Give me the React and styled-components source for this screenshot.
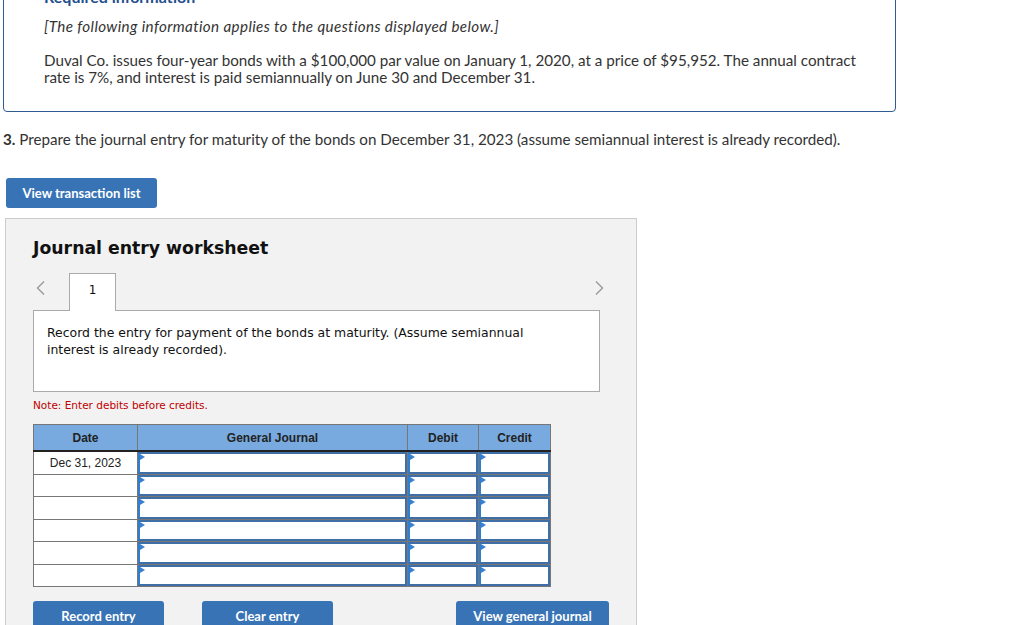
import styled, { createGlobalStyle } from "styled-components";

const GlobalStyle = createGlobalStyle`
  body {
    margin: 0;
    background: #fff;
    font-family: Lato, "Liberation Sans", sans-serif;
    color: #333;
  }
`;

const rows = ["Dec 31, 2023", "", "", "", "", ""];

function Chevron({ right }) {
  return (
    <svg width="10" height="16" viewBox="0 0 10 16">
      <path
        d={right ? "M2 1.5 L8.5 8 L2 14.5" : "M8 1.5 L1.5 8 L8 14.5"}
        fill="none"
        stroke="#9a9a9a"
        strokeWidth="1.4"
      />
    </svg>
  );
}

export default function App() {
  return (
    <Page>
      <GlobalStyle />
      <InfoBox>
        <InfoTitle>Required information</InfoTitle>
        <Italic>[The following information applies to the questions displayed below.]</Italic>
        <InfoText>
          Duval Co. issues four-year bonds with a $100,000 par value on January 1, 2020, at a
          price of $95,952. The annual contract rate is 7%, and interest is paid semiannually on
          June 30 and December 31.
        </InfoText>
      </InfoBox>

      <Question>
        <b>3.</b> Prepare the journal entry for maturity of the bonds on December 31, 2023 (assume
        semiannual interest is already recorded).
      </Question>

      <BlueButton $width={151}>View transaction list</BlueButton>

      <Worksheet>
        <WorksheetTitle>Journal entry worksheet</WorksheetTitle>

        <TabRow>
          <Arrow>
            <Chevron />
          </Arrow>
          <Tab>1</Tab>
          <Arrow $right>
            <Chevron right />
          </Arrow>
        </TabRow>

        <EntryBox>
          Record the entry for payment of the bonds at maturity. (Assume semiannual
          <br />
          interest is already recorded).
        </EntryBox>

        <Note>Note: Enter debits before credits.</Note>

        <Table>
          <thead>
            <tr>
              <Th $w={103}>Date</Th>
              <Th $w={269}>General Journal</Th>
              <Th $w={70}>Debit</Th>
              <Th $w={71}>Credit</Th>
            </tr>
          </thead>
          <tbody>
            {rows.map((d, i) => (
              <tr key={i}>
                <DateCell>{d}</DateCell>
                <InputCell>
                  <Field />
                </InputCell>
                <InputCell>
                  <Field />
                </InputCell>
                <InputCell>
                  <Field />
                </InputCell>
              </tr>
            ))}
          </tbody>
        </Table>

        <ButtonRow>
          <BlueButton $width={131}>Record entry</BlueButton>
          <BlueButton $width={131}>Clear entry</BlueButton>
          <Spacer />
          <BlueButton $width={153}>View general journal</BlueButton>
        </ButtonRow>
      </Worksheet>
    </Page>
  );
}

const Page = styled.div`
  width: 1024px;
  height: 625px;
  overflow: hidden;
`;

const InfoBox = styled.section`
  margin: -30px 0 0 3px;
  width: 893px;
  box-sizing: border-box;
  border: 1px solid #2d5b92;
  border-radius: 4px;
  padding: 16px 30px 25px 40px;
`;

const InfoTitle = styled.h3`
  margin: 0 0 11px;
  font-size: 16px;
  font-weight: 700;
  color: #1f4f8e;
  line-height: 20px;
`;

const Italic = styled.p`
  margin: 0 0 17px;
  font-style: italic;
  font-size: 15.2px;
  letter-spacing: 0.38px;
  line-height: 17px;
`;

const InfoText = styled.p`
  margin: 0;
  font-size: 15.2px;
  line-height: 17px;
`;

const Question = styled.p`
  margin: 19px 0 0 3px;
  font-size: 15.2px;
  line-height: 17px;
  b {
    font-weight: 700;
  }
`;

const BlueButton = styled.button`
  display: block;
  width: ${(p) => p.$width}px;
  height: 30px;
  border: none;
  border-radius: 3px;
  background: #3873b6;
  color: #fff;
  font-family: Lato, "Liberation Sans", sans-serif;
  font-size: 13px;
  font-weight: 700;
  padding: 0;
  margin: 0;
  ${Question} + & {
    margin: 30px 0 0 6px;
  }
`;

const Worksheet = styled.section`
  margin: 10px 0 0 5px;
  width: 632px;
  box-sizing: border-box;
  background: #f2f2f2;
  border: 1px solid #cccccc;
  padding: 16px 0 0 27px;
  height: 420px;
`;

const WorksheetTitle = styled.h2`
  margin: 0;
  font-family: "DejaVu Sans", Verdana, sans-serif;
  font-size: 17.3px;
  font-weight: 700;
  color: #111;
  line-height: 26px;
`;

const TabRow = styled.div`
  display: flex;
  align-items: flex-end;
  width: 566px;
  margin-top: 11px;
  height: 38px;
`;

const Arrow = styled.span`
  display: flex;
  align-self: center;
  margin-left: ${(p) => (p.$right ? "auto" : "3px")};
  margin-right: ${(p) => (p.$right ? "-5px" : "23px")};
  margin-top: -6px;
`;

const Tab = styled.div`
  width: 47px;
  height: 38px;
  box-sizing: border-box;
  background: #fff;
  border: 1px solid #aaa;
  border-bottom: none;
  font-family: "DejaVu Sans", Verdana, sans-serif;
  font-size: 12px;
  color: #111;
  text-align: center;
  padding-top: 9px;
  position: relative;
  top: 1px;
`;

const EntryBox = styled.div`
  width: 567px;
  height: 82px;
  box-sizing: border-box;
  background: #fff;
  border: 1px solid #aaa;
  padding: 13px 13px;
  font-family: "DejaVu Sans", Verdana, sans-serif;
  font-size: 12.45px;
  line-height: 17px;
  color: #111;
`;

const Note = styled.p`
  margin: 7px 0 0;
  font-family: "DejaVu Sans", Verdana, sans-serif;
  font-size: 10.5px;
  color: #c00000;
`;

const Table = styled.table`
  margin-top: 13px;
  border-collapse: collapse;
  font-family: "Liberation Sans", Arial, sans-serif;
  font-size: 12px;
  color: #222;
`;

const Th = styled.th`
  width: ${(p) => p.$w}px;
  height: 24px;
  padding: 1px 0 0;
  background: #78aae0;
  border: 1px solid #777;
  border-bottom: 2px solid #222;
  font-weight: 700;
  color: #222;
`;

const DateCell = styled.td`
  height: 21.5px;
  padding: 0;
  background: #fff;
  border: 1px solid #777;
  text-align: center;
`;

const InputCell = styled.td`
  height: 21.5px;
  padding: 0;
  border: 1px solid #777;
  background: #fff;
`;

const Field = styled.div`
  position: relative;
  height: 21.5px;
  box-sizing: border-box;
  border: 2px solid #3f6fa6;
  border-left-color: #2f7fd0;
  background: #fff;
  &::before {
    content: "";
    position: absolute;
    left: 0;
    top: 0;
    border-left: 5px solid #3b80d0;
    border-top: 3px solid transparent;
    border-bottom: 3px solid transparent;
  }
`;

const ButtonRow = styled.div`
  display: flex;
  width: 576px;
  margin-top: 14px;
  gap: 38px;
`;

const Spacer = styled.div`
  flex: 1;
`;
